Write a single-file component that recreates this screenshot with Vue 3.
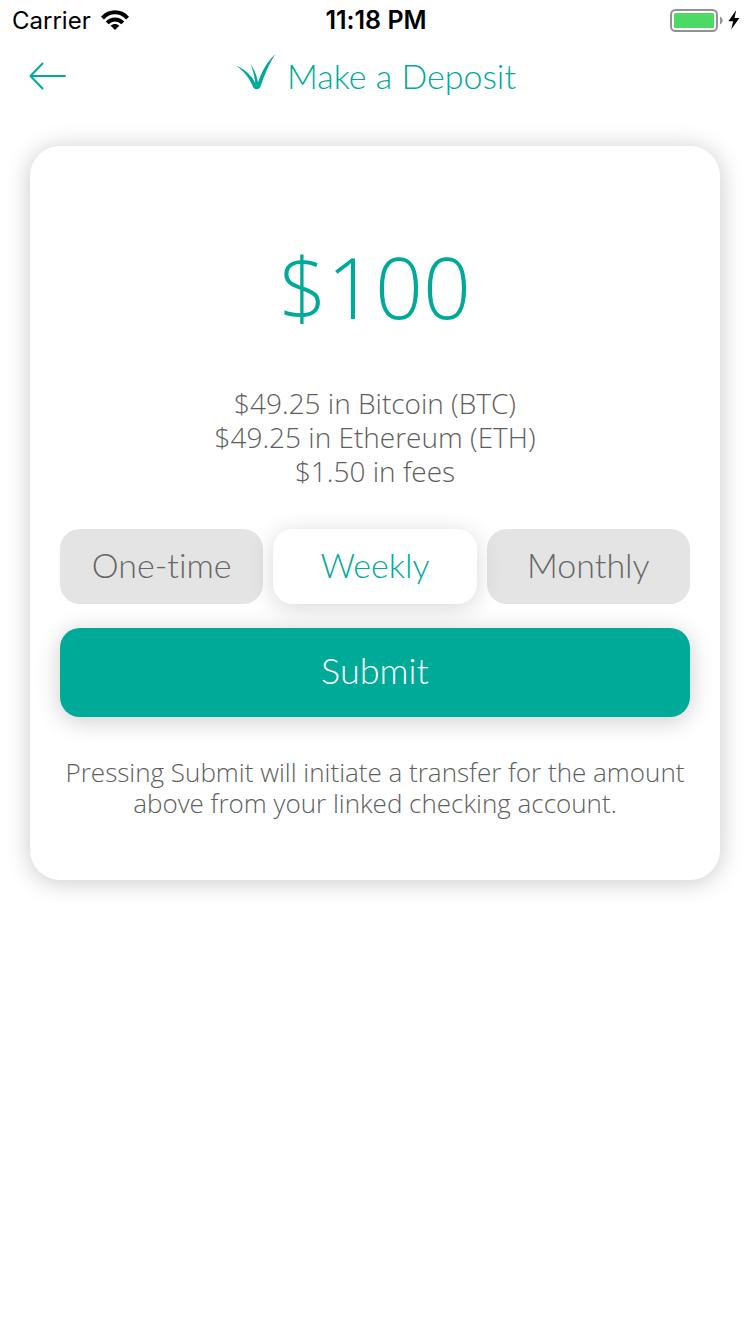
<script setup>
import { ref } from 'vue'

const allocations = [
  '$49.25 in Bitcoin (BTC)',
  '$49.25 in Ethereum (ETH)',
  '$1.50 in fees',
].join('\n')
const frequencies = ['One-time', 'Weekly', 'Monthly']
const selected = ref('Weekly')
</script>

<template>
  <div class="screen">
    <div class="status">
      <div class="carrier">
        <span>Carrier</span>
        <svg class="wifi" viewBox="0 0 28 20" aria-hidden="true">
          <g fill="none" stroke="#000" stroke-width="4">
            <path d="M1.4 8.1C8.6 .4 19.4 .4 26.6 8.1" />
            <path d="M6.2 12.9C10.6 8.3 17.4 8.3 21.8 12.9" />
          </g>
          <path d="M14 20l-4.3-4.2c2.4-2.3 6.2-2.3 8.6 0z" />
        </svg>
      </div>
      <span class="clock">11:18 PM</span>
      <div class="power">
        <svg class="battery" viewBox="0 0 54 24" aria-hidden="true">
          <rect x="1" y="2" width="46" height="21" rx="4.5" fill="#fff" stroke="#929292" stroke-width="2" />
          <rect x="4" y="5" width="40" height="15" rx="1.5" fill="#4cd964" />
          <path d="M50 8.500c3.400 1.400 3.400 6.600 0 8z" fill="#929292" />
        </svg>
        <svg class="bolt" viewBox="0 0 12 20" aria-hidden="true">
          <path d="M8.2 0L.4 11.2h4.7L3.2 19.6 11.4 8H6.5z" />
        </svg>
      </div>
    </div>

    <header class="nav">
      <button class="back" type="button" aria-label="Back">
        <svg viewBox="0 0 38 30" fill="none" stroke="#00aa99" stroke-width="2" stroke-linecap="round" stroke-linejoin="round" aria-hidden="true">
          <path d="M36 15H1.5M13.5 2.5L1.5 15l12 12.5" />
        </svg>
      </button>
      <h1 class="title">
        <svg class="logo" viewBox="0 0 40 36" fill="#00aa99" aria-hidden="true">
          <path d="M0 11.500C9 15.200 15.500 21.500 19.300 29C18.700 23.500 17.300 16.500 14.500 10C19 16.500 20.800 22 22 28.500C25.500 18 31 7.500 39.500 0C33 9.500 28.500 21.500 24.300 33C23 36 18.500 36 17.200 33C13.500 24.500 8.500 17.500 0 11.500z" />
        </svg>
        <span>Make a Deposit</span>
      </h1>
    </header>

    <main class="card">
      <p class="amount">$100</p>
      <p class="split">{{ allocations }}</p>
      <div class="choices" role="group" aria-label="Deposit frequency">
        <button
          v-for="name in frequencies"
          :key="name"
          type="button"
          class="choice"
          :class="{ active: name === selected }"
          :aria-pressed="name === selected"
          @click="selected = name"
        >{{ name }}</button>
      </div>
      <button class="submit" type="button">Submit</button>
      <p class="note">Pressing Submit will initiate a transfer for the amount above from your linked checking account.</p>
    </main>
  </div>
</template>

<style>
body {
  background: #fff;
}
</style>

<style scoped>
.screen {
  min-height: 100vh;
  font-family: Lato, "Open Sans", sans-serif;
  font-weight: 300;
  font-variant-ligatures: none;
  color: #5e5e5e;
}
.status {
  display: grid;
  grid-template-columns: 1fr auto 1fr;
  align-items: center;
  height: 40px;
  padding: 0 10px 0 12px;
  font-family: Inter, sans-serif;
  font-size: 24px;
  font-weight: 400;
  color: #000;
}
.carrier,
.power {
  display: flex;
  align-items: center;
}
.carrier {
  gap: 10px;
}
.power {
  justify-content: flex-end;
  gap: 4px;
}
.clock {
  font-size: 25px;
  font-weight: 600;
}
.wifi {
  width: 28px;
  height: 20px;
}
.battery {
  width: 54px;
  height: 24px;
}
.bolt {
  width: 12px;
  height: 20px;
}
.nav {
  display: grid;
  grid-template-columns: 38px 1fr 36px;
  align-items: center;
  height: 72px;
  padding: 0 29px;
}
button {
  margin: 0;
  border: 0;
  padding: 0;
  font: inherit;
  font-variant-ligatures: none;
  cursor: pointer;
}
.back {
  display: block;
  height: 30px;
  background: none;
}
.back svg {
  display: block;
  width: 38px;
  height: 30px;
}
.title {
  display: flex;
  align-items: center;
  justify-content: center;
  gap: 11px;
  margin: 0;
  font-size: 34px;
  line-height: 44px;
  font-weight: 300;
  color: #00aa99;
}
.logo {
  width: 40px;
  height: 36px;
  margin-bottom: 8px;
}
.card {
  margin: 34px 30px;
  padding: 83px 30px 61px;
  border-radius: 30px;
  background: #fff;
  box-shadow: 0 2px 24px rgba(0, 0, 0, 0.22);
  text-align: center;
}
.amount {
  margin: 0;
  font-family: "Open Sans", sans-serif;
  font-size: 84px;
  line-height: 116px;
  color: #00aa99;
}
.split {
  margin: 41px 0 0;
  font-family: "Open Sans", sans-serif;
  font-size: 28px;
  line-height: 34px;
  white-space: pre-line;
}
.choices {
  display: grid;
  grid-template-columns: repeat(3, 1fr);
  gap: 10px;
  margin-top: 41px;
}
.choice {
  height: 75px;
  padding-bottom: 5px;
  border-radius: 20px;
  background: #e4e4e4;
  font-size: 34px;
  color: #666;
}
.choice.active {
  position: relative;
  z-index: 1;
  background: #fff;
  box-shadow: 0 4px 24px rgba(0, 0, 0, 0.16);
  color: #00aa99;
}
.submit {
  position: relative;
  z-index: 2;
  width: 100%;
  height: 89px;
  margin-top: 24px;
  padding-bottom: 6px;
  border-radius: 20px;
  background: #00aa99;
  box-shadow: 0 4px 24px rgba(0, 0, 0, 0.2);
  font-size: 36px;
  color: #fff;
}
.note {
  margin: 40px 0 0;
  font-family: "Open Sans", sans-serif;
  font-size: 26px;
  line-height: 31px;
}
</style>
